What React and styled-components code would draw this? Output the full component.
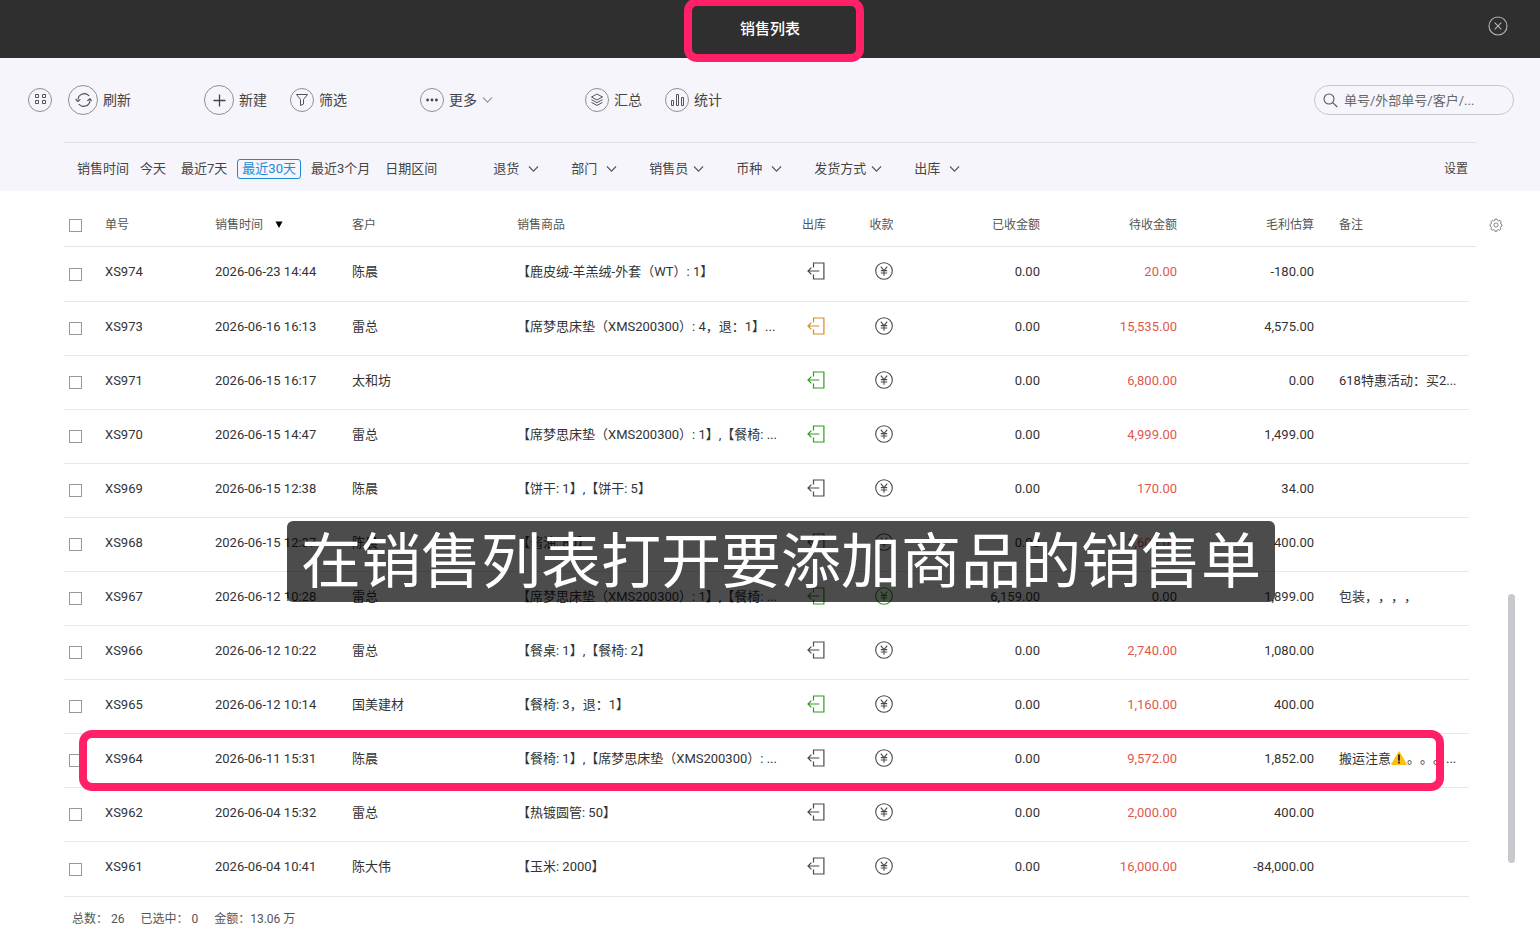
import React, { useState } from 'react'
import styled, { createGlobalStyle } from 'styled-components'

const rows = [
    { id: 'XS974', time: '2026-06-23 14:44', customer: '陈晨', goods: '【鹿皮绒-羊羔绒-外套（WT）: 1】', out: 'none', paid: '0.00', due: '20.00', profit: '-180.00' },
    { id: 'XS973', time: '2026-06-16 16:13', customer: '雷总', goods: '【席梦思床垫（XMS200300）: 4，退：1】...', out: 'part', paid: '0.00', due: '15,535.00', profit: '4,575.00' },
    { id: 'XS971', time: '2026-06-15 16:17', customer: '太和坊', goods: '', out: 'done', paid: '0.00', due: '6,800.00', profit: '0.00', remark: '618特惠活动：买2...' },
    { id: 'XS970', time: '2026-06-15 14:47', customer: '雷总', goods: '【席梦思床垫（XMS200300）: 1】,【餐椅: ...', out: 'done', paid: '0.00', due: '4,999.00', profit: '1,499.00' },
    { id: 'XS969', time: '2026-06-15 12:38', customer: '陈晨', goods: '【饼干: 1】,【饼干: 5】', out: 'none', paid: '0.00', due: '170.00', profit: '34.00' },
    { id: 'XS968', time: '2026-06-15 12:37', customer: '陈晨', goods: '【酱油: 80】', out: 'none', paid: '0.00', due: '1,600.00', profit: '400.00' },
    { id: 'XS967', time: '2026-06-12 10:28', customer: '雷总', goods: '【席梦思床垫（XMS200300）: 1】,【餐椅: ...', out: 'done', pay: 'done', paid: '6,159.00', due: '0.00', profit: '1,899.00', remark: '包装，，，，' },
    { id: 'XS966', time: '2026-06-12 10:22', customer: '雷总', goods: '【餐桌: 1】,【餐椅: 2】', out: 'none', paid: '0.00', due: '2,740.00', profit: '1,080.00' },
    { id: 'XS965', time: '2026-06-12 10:14', customer: '国美建材', goods: '【餐椅: 3，退：1】', out: 'done', paid: '0.00', due: '1,160.00', profit: '400.00' },
    { id: 'XS964', time: '2026-06-11 15:31', customer: '陈晨', goods: '【餐椅: 1】,【席梦思床垫（XMS200300）: ...', out: 'none', paid: '0.00', due: '9,572.00', profit: '1,852.00', remark: '搬运注意', warn: '。。。...' },
    { id: 'XS962', time: '2026-06-04 15:32', customer: '雷总', goods: '【热镀圆管: 50】', out: 'none', paid: '0.00', due: '2,000.00', profit: '400.00' },
    { id: 'XS961', time: '2026-06-04 10:41', customer: '陈大伟', goods: '【玉米: 2000】', out: 'none', paid: '0.00', due: '16,000.00', profit: '-84,000.00' },
]

const periods = ['今天', '最近7天', '最近30天', '最近3个月', '日期区间']
const filters = ['退货', '部门', '销售员', '币种', '发货方式', '出库']
const statusColor = { none: '#4a4a4a', part: '#d98a1f', done: '#2f9e1c' }

const GridIcon = () => (
    <svg width="12" height="14" viewBox="0 0 12 14" fill="none" stroke="#555">
        <path d="M1.5 1.5h3v3h-3zM8.5 1.5h3v3h-3zM1.5 7.5h3v3h-3zM8.5 7.5h3v3h-3z" />
    </svg>
)
const RefreshIcon = () => (
    <svg width="18" height="18" viewBox="0 0 18 18" fill="none" stroke="#444" strokeWidth="1.1">
        <path d="M4 8.5A6.3 6.3 0 0 1 15.2 5M16 9.5A6.3 6.3 0 0 1 4.8 13" />
        <path d="M1.6 8.2l2.2 2.2 2.6-2M13.4 9.8l2.6-2 1.8 2.2" />
    </svg>
)
const PlusIcon = () => (
    <svg width="14" height="14" viewBox="0 0 14 14" stroke="#444" strokeWidth="1.3">
        <path d="M7.5 1.5v12M1.5 7.5h12" />
    </svg>
)
const FunnelIcon = () => (
    <svg width="14" height="14" viewBox="0 0 14 14" fill="none" stroke="#555" strokeLinejoin="round">
        <path d="M1.5 1.5h11L8.5 6.5v4.5l-3 1.5v-6z" />
    </svg>
)
const DotsIcon = () => (
    <svg width="14" height="14" viewBox="0 0 14 14" fill="#444">
        <circle cx="2.6" cy="7" r="1.4" />
        <circle cx="7" cy="7" r="1.4" />
        <circle cx="11.4" cy="7" r="1.4" />
    </svg>
)
const LayersIcon = () => (
    <svg width="14" height="14" viewBox="0 0 14 14" fill="none" stroke="#555" strokeLinejoin="round">
        <path d="M7 1l5.5 3L7 7 1.5 4z" />
        <path d="M1.5 6.7L7 9.7l5.5-3M1.5 9.4L7 12.4l5.5-3" />
    </svg>
)
const ChartIcon = () => (
    <svg width="14" height="14" viewBox="0 0 14 14" fill="none" stroke="#555">
        <path d="M1.5 7.5h2v5h-2zM6.5 1.5h2v11h-2zM11.5 4.5h2v8h-2z" />
    </svg>
)
const Chevron = ({ color = '#555' }) => (
    <svg width="11" height="8" viewBox="0 0 11 8" fill="none" stroke={color} strokeWidth="1.1">
        <path d="M1 1.5l4.5 4.7L10 1.5" />
    </svg>
)
const SearchIcon = () => (
    <svg width="16" height="16" viewBox="0 0 16 16" fill="none" stroke="#555" strokeWidth="1.1">
        <circle cx="6" cy="7" r="5" />
        <path d="M9.7 10.7l4.6 4.3" />
    </svg>
)
const CloseIcon = () => (
    <svg width="20" height="20" viewBox="0 0 20 20" fill="none" stroke="#b5b5b5" strokeWidth="1.1">
        <circle cx="10" cy="10" r="9" />
        <path d="M6.7 6.7l6.6 6.6M13.3 6.7l-6.6 6.6" />
    </svg>
)
const GearIcon = () => (
    <svg width="14" height="14" viewBox="0 0 14 14" fill="none" stroke="#777" strokeWidth="0.9" strokeLinejoin="round">
        <path d="M5.9 1.1h2.2l.4 1.4 1.2.5 1.3-.7 1.2 1.5-.7 1.2.5 1 1 .5v1.6l-1.2.5-.5 1 .6 1.4-1.4 1.3-1.3-.7-1 .4-.5 1.4H6l-.4-1.4-1.1-.4-1.4.7-1.3-1.4.7-1.3-.5-1L1 8.1V6.3l1.1-.5.5-1-.6-1.2 1.3-1.4 1.3.7 1-.4z" />
        <circle cx="7" cy="7" r="2.1" />
    </svg>
)
const OutIcon = ({ color }) => (
    <svg width="18" height="18" viewBox="0 0 18 18" fill="none" stroke={color} strokeWidth="1.2">
        <path d="M6.5 5.6V1h10.4v16H6.5v-4.6" />
        <path d="M12.3 9H1M4.4 5.6L1 9l3.4 3.4" />
    </svg>
)
const YenIcon = ({ color }) => (
    <svg width="18" height="18" viewBox="0 0 18 18" fill="none" stroke={color} strokeWidth="1.1">
        <circle cx="9" cy="9" r="8.3" />
        <path d="M5.8 4.6L9 8.6l3.2-4M9 8.6v5.2M5.8 8.6h6.4M5.8 11h6.4" />
    </svg>
)
const WarnIcon = () => (
    <svg width="16" height="14" viewBox="0 0 16 14">
        <path d="M8 1l7 12.2H1z" fill="#fbbf16" stroke="#fbbf16" strokeWidth="1.4" strokeLinejoin="round" />
        <path d="M8 4.2v4.9" stroke="#222" strokeWidth="1.8" strokeLinecap="round" />
        <circle cx="8" cy="11.4" r="1" fill="#222" />
    </svg>
)

const App = () => {
    const [period, setPeriod] = useState('最近30天')
    const [checked, setChecked] = useState([])

    const toggle = (id) => {
        setChecked(checked.includes(id) ? checked.filter((c) => c !== id) : [...checked, id])
    }
    const toggleAll = () => {
        setChecked(checked.length === rows.length ? [] : rows.map((r) => r.id))
    }

    return (
        <Page>
            <GlobalStyle />
            <Header>
                <Title>销售列表</Title>
                <CloseButton aria-label="关闭"><CloseIcon /></CloseButton>
                <TitleMark />
            </Header>

            <Controls>
                <Toolbar>
                    <Group $gap={16}>
                        <ToolButton aria-label="菜单"><Round><GridIcon /></Round></ToolButton>
                        <ToolButton><Round $large><RefreshIcon /></Round>刷新</ToolButton>
                    </Group>
                    <Group $gap={23}>
                        <ToolButton><Round $large><PlusIcon /></Round>新建</ToolButton>
                        <ToolButton><Round><FunnelIcon /></Round>筛选</ToolButton>
                    </Group>
                    <MoreGroup>
                        <ToolButton><Round><DotsIcon /></Round>更多 <Chevron color="#999" /></ToolButton>
                    </MoreGroup>
                    <Group $gap={23}>
                        <ToolButton><Round><LayersIcon /></Round>汇总</ToolButton>
                        <ToolButton><Round><ChartIcon /></Round>统计</ToolButton>
                    </Group>
                    <SearchBox>
                        <SearchIcon />
                        <SearchInput aria-label="搜索" placeholder="单号/外部单号/客户/..." />
                    </SearchBox>
                </Toolbar>

                <FilterBar>
                    <FilterLabel>销售时间</FilterLabel>
                    <Periods>
                        {periods.map((p) => (
                            <Period key={p} $active={p === period} onClick={() => setPeriod(p)}>{p}</Period>
                        ))}
                    </Periods>
                    <Filters>
                        {filters.map((f) => (
                            <FilterItem key={f}>
                                <FilterSelect aria-label={f}>
                                    <option>{f}</option>
                                </FilterSelect>
                                <Chevron />
                            </FilterItem>
                        ))}
                    </Filters>
                    <SettingButton>设置</SettingButton>
                </FilterBar>
            </Controls>

            <Content>
                <Table>
                    <colgroup>
                        <Col $w={41} />
                        <Col $w={110} />
                        <Col $w={137} />
                        <Col $w={165} />
                        <col />
                        <Col $w={62} />
                        <Col $w={73} />
                        <Col $w={120} />
                        <Col $w={137} />
                        <Col $w={137} />
                        <Col $w={155} />
                        <Col $w={7} />
                    </colgroup>
                    <thead>
                        <tr>
                            <Th>
                                <Checkbox aria-label="全选" checked={checked.length === rows.length} onChange={toggleAll} />
                            </Th>
                            <Th>单号</Th>
                            <Th>
                                <SortButton>
                                    销售时间
                                    <svg width="8" height="8" viewBox="0 0 8 8"><path d="M0.5 0.5h7L4 7z" /></svg>
                                </SortButton>
                            </Th>
                            <Th>客户</Th>
                            <Th>销售商品</Th>
                            <IconTh>出库</IconTh>
                            <IconTh>收款</IconTh>
                            <Th $align="right">已收金额</Th>
                            <Th $align="right">待收金额</Th>
                            <Th $align="right">毛利估算</Th>
                            <RemarkTh colSpan={2}>备注</RemarkTh>
                        </tr>
                    </thead>
                    <Tbody>
                        {rows.map((r) => (
                            <tr key={r.id}>
                                <CheckTd>
                                    <Checkbox aria-label={r.id} checked={checked.includes(r.id)} onChange={() => toggle(r.id)} />
                                </CheckTd>
                                <Td>{r.id}</Td>
                                <Td>{r.time}</Td>
                                <Td>{r.customer}</Td>
                                <Td>{r.goods}</Td>
                                <IconTd><OutIcon color={statusColor[r.out]} /></IconTd>
                                <IconTd><YenIcon color={statusColor[r.pay || 'none']} /></IconTd>
                                <Td $align="right">{r.paid}</Td>
                                <DueTd $align="right" $settled={r.due === '0.00'}>{r.due}</DueTd>
                                <Td $align="right">{r.profit}</Td>
                                <RemarkTd>
                                    {r.remark}
                                    {r.warn && <><WarnIcon />{r.warn}</>}
                                </RemarkTd>
                                <td />
                            </tr>
                        ))}
                    </Tbody>
                </Table>
                <Side>
                    <GearButton aria-label="列设置"><GearIcon /></GearButton>
                    <Track><Thumb /></Track>
                </Side>
                <RowMark />
                <Caption>在销售列表打开要添加商品的销售单</Caption>
            </Content>

            <Footer>
                <span>总数： 26</span>
                <span>已选中： {checked.length}</span>
                <span>金额：13.06 万</span>
            </Footer>
        </Page>
    )
}

export default App


const GlobalStyle = createGlobalStyle`
  * {
    box-sizing: border-box;
  }
  body {
    margin: 0;
    background: #fff;
    color: #333;
    font-family: Roboto, "Noto Sans CJK SC", sans-serif;
    font-size: 13px;
    line-height: 20px;
    text-spacing-trim: space-all;
  }
  button, input, select {
    font: inherit;
    color: inherit;
  }
  button {
    padding: 0;
    border: 0;
    background: none;
    cursor: pointer;
  }
  svg {
    flex: none;
  }
`;
const Page = styled.div`
  min-width: 1280px;
`;
const Header = styled.header`
  position: relative;
  display: flex;
  align-items: center;
  justify-content: flex-end;
  height: 58px;
  padding: 0 32px 6px 0;
  background: #2f2f2f;
`;
const Title = styled.h1`
  flex: 1;
  margin: 0;
  padding: 6px 0 0 52px;
  color: #fff;
  font-size: 15px;
  font-weight: 500;
  line-height: 24px;
  text-align: center;
`;
const CloseButton = styled.button`
  display: flex;
`;
const Mark = styled.div`
  position: absolute;
  border: 8px solid #ff2068;
  border-radius: 13px;
  pointer-events: none;
`;
const TitleMark = styled(Mark)`
  top: -2px;
  left: calc(50% - 86px);
  width: 180px;
  height: 64px;
`;
const RowMark = styled(Mark)`
  top: 539px;
  left: 79px;
  right: 96px;
  height: 61px;
`;
const Controls = styled.section`
  background: #f6f5fb;
  color: #444;
`;
const Toolbar = styled.div`
  display: flex;
  align-items: center;
  gap: 73px;
  height: 84px;
  padding: 0 26px 0 28px;
`;
const Group = styled.div`
  display: flex;
  align-items: center;
  gap: ${({ $gap }) => $gap}px;
`;
const MoreGroup = styled.div`
  padding-right: 19px;
`;
const ToolButton = styled.button`
  display: flex;
  align-items: center;
  gap: 5px;
  font-size: 14px;
  white-space: nowrap;
`;
const Round = styled.span`
  display: flex;
  align-items: center;
  justify-content: center;
  width: ${({ $large }) => ($large ? 30 : 24)}px;
  height: ${({ $large }) => ($large ? 30 : 24)}px;
  border: 1px solid #8f8f94;
  border-radius: 50%;
`;
const SearchBox = styled.label`
  display: flex;
  align-items: center;
  gap: 5px;
  width: 200px;
  height: 30px;
  margin-left: auto;
  padding: 0 12px 0 8px;
  border: 1px solid #c6c6cc;
  border-radius: 15px;
`;
const SearchInput = styled.input`
  flex: 1;
  min-width: 0;
  padding: 2px 0 0;
  border: 0;
  outline: 0;
  background: none;

  &::placeholder {
    color: #666;
    opacity: 1;
  }
`;
const FilterBar = styled.div`
  display: flex;
  align-items: center;
  height: 49px;
  margin: 0 64px;
  padding: 4px 8px 0 13px;
  border-top: 1px solid #dfdfe5;
`;
const FilterLabel = styled.span`
  margin-right: 6px;
`;
const Periods = styled.div`
  display: flex;
  gap: 5px;
`;
const Period = styled.button`
  height: 20px;
  padding: 0 4px;
  border: 1px solid ${({ $active }) => ($active ? '#1c8bd6' : 'transparent')};
  border-radius: 3px;
  color: ${({ $active }) => ($active ? '#1c8bd6' : 'inherit')};
  line-height: 18px;
  white-space: nowrap;
`;
const Filters = styled.div`
  display: flex;
  gap: 32px;
  margin-left: 51px;
`;
const FilterItem = styled.label`
  display: flex;
  align-items: center;
  gap: 4px;
`;
const FilterSelect = styled.select`
  appearance: none;
  min-width: 31px;
  padding: 0;
  border: 0;
  outline: 0;
  background: none;
`;
const SettingButton = styled.button`
  margin-left: auto;
  font-size: 12px;
`;
const Content = styled.main`
  position: relative;
  display: flex;
  padding-left: 64px;
`;
const Table = styled.table`
  flex: 1;
  min-width: 0;
  table-layout: fixed;
  border-collapse: separate;
  border-spacing: 0;
`;
const Col = styled.col`
  width: ${({ $w }) => $w}px;
`;
const Th = styled.th`
  height: 56px;
  padding: 13px 0 0;
  border-bottom: 1px solid #e6e6e6;
  color: #555;
  font-size: 12px;
  font-weight: 400;
  text-align: ${({ $align }) => $align || 'left'};
  white-space: nowrap;
`;
const IconTh = styled(Th)`
  padding-right: 4px;
  text-align: center;
`;
const RemarkTh = styled(Th)`
  padding-left: 25px;
`;
const Td = styled.td`
  height: 54px;
  padding: 0 0 4px;
  border-bottom: 1px solid #e8e8e8;
  text-align: ${({ $align }) => $align || 'left'};
  white-space: nowrap;
`;
const Tbody = styled.tbody`
  tr:first-child td,
  tr:last-child td {
    height: 55px;
  }
`;
const CheckTd = styled(Td)`
  padding: 0;
`;
const IconTd = styled(Td)`
  padding-bottom: 6px;
  text-align: center;

  svg {
    display: block;
    margin: 0 auto;
  }
`;
const DueTd = styled(Td)`
  color: ${({ $settled }) => ($settled ? '#333' : '#e0584b')};
`;
const RemarkTd = styled(Td)`
  padding-left: 25px;

  svg {
    vertical-align: -2px;
  }
`;
const Checkbox = styled.input.attrs({ type: 'checkbox' })`
  display: block;
  appearance: none;
  width: 13px;
  height: 13px;
  margin: 0 0 0 5px;
  border: 1px solid #999;
  background: #fff;

  &:checked {
    background: #1c8bd6;
  }
`;
const SortButton = styled.button`
  display: flex;
  align-items: center;
  gap: 12px;
`;
const Side = styled.div`
  display: flex;
  flex-direction: column;
  width: 64px;
`;
const GearButton = styled.button`
  display: flex;
  align-items: center;
  height: 56px;
  padding: 12px 0 0 13px;
`;
const Track = styled.div`
  display: grid;
  flex: 1;
  grid-template-rows: 347fr 269fr 34fr;
  padding-left: 32px;
`;
const Thumb = styled.div`
  grid-row: 2;
  width: 7px;
  border-radius: 4px;
  background: #c8c9cc;
`;
const Caption = styled.div`
  position: absolute;
  top: 330px;
  left: calc(50% + 11px);
  transform: translateX(-50%);
  padding: 2px 14px 0;
  border-radius: 6px;
  background: rgba(0, 0, 0, 0.7);
  color: #fff;
  font-size: 60px;
  line-height: 79px;
  white-space: nowrap;
`;
const Footer = styled.footer`
  display: flex;
  gap: 16px;
  padding: 12px 72px 11px;
  color: #555;
  font-size: 12px;
`;
